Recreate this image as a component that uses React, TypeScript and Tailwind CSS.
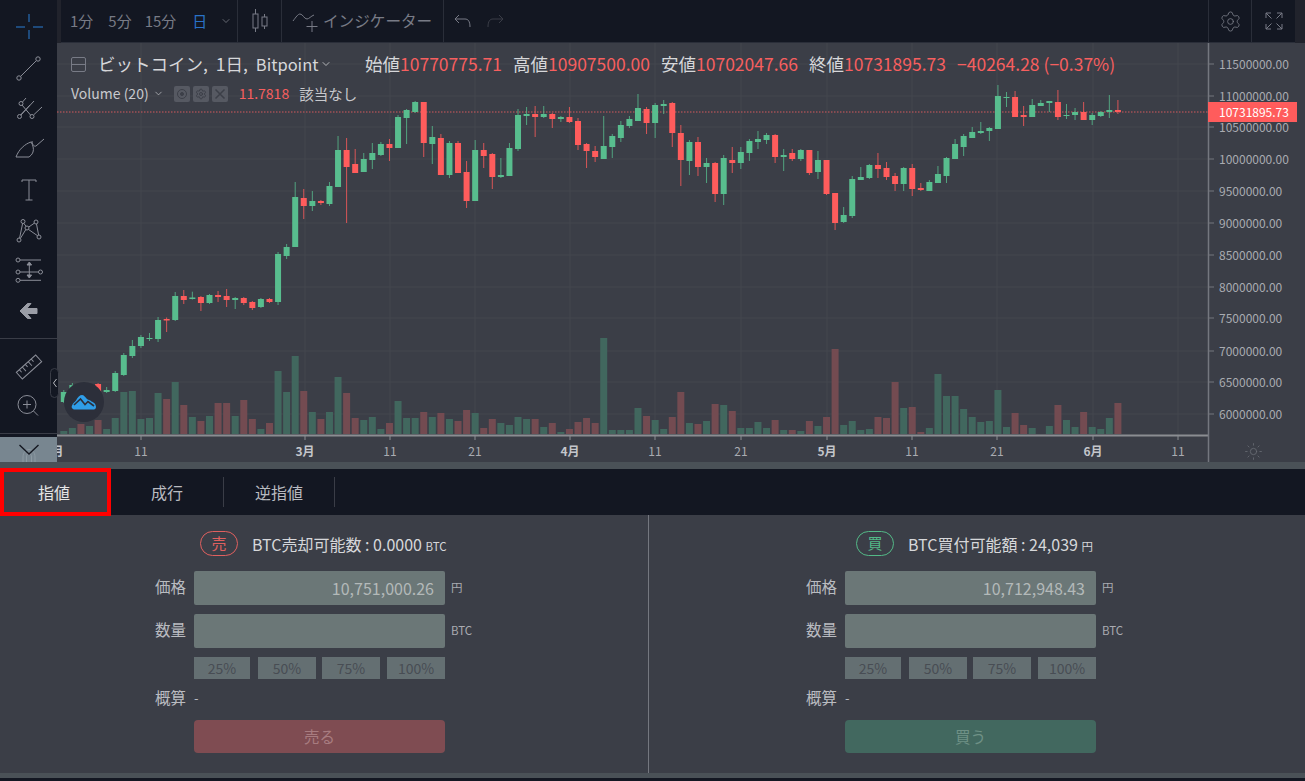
import React from 'react'
import { Settings, ChevronDown, Sun } from 'lucide-react'

// candle tuples: [bodyTop, bodyBottom, wickTop, wickBottom, 1 = green | 0 = red]
const CANDLES: number[][] = [
  [392,402,390,403,1],[385,393,383,395,1],[388,394,386,396,1],[386,392,384,394,0],[384,392,383,393,0],[390,392,387,393,1],[373,391,371,392,1],[355,375,353,376,1],[346,356,340,358,1],[337,346,335,348,1],
  [338,339,333,341,1],[320,339,317,342,1],[319,320.5,317.5,332,0],[296,320,292,321,1],[296,300,290,304,0],[297.5,299,291.7,299.5,1],[297,303,296,311,0],[295,303,294,304,1],[295,297,291,302,0],[296,300,289,307,0],
  [298,300,297,309,1],[298,303,297,305,0],[302,308,301,310,0],[299,307,298,308,1],[299,302,298,303,0],[254,302,252,305,1],[247,256,244,259,1],[197,247,182,247,1],[198,206,189,219,0],[201,206,191,211,1],
  [201,203,200,205,0],[186,204,182,206,1],[150,187,136,187,1],[150,167,138,223,0],[164,173,149,173,0],[159,172,153,172,1],[153,160,143,169,1],[144,155,142,156,1],[144,148,139,161,0],[117,148,115,148,1],
  [110,118,109,144,1],[102,112,101,113,1],[102,143,102,157,0],[137,144,126,164,1],[138,175,134,175,0],[143,175,141,178,1],[143,173,141,173,0],[172,201,161,208,0],[150,201,140,201,1],[150,156,143,168,0],
  [154,177,153,189,0],[175,177,158,178,1],[148,176,143,176,1],[115,149,109,151,1],[114,116,107,125,1],[114,117,106,137,0],[114,117,106,118,1],[114,119,113,128,0],[117,119,116,122,1],[117,122,107,123,0],
  [121,145,118,150,0],[144,151,143,168,0],[151,157,146,162,0],[146,159,116,159,1],[136,147,134,158,1],[125,138,121,142,1],[119,126,116,128,1],[108,121,94,121,1],[109,123,107,134,0],[105,123,103,138,1],
  [104,106,100,114,1],[103,133,102,147,0],[133,160,125,186,0],[142,161,140,175,1],[142,167,137,176,0],[163,167,158,183,1],[163,194,162,202,0],[158,194,155,205,1],[160,163,147,173,0],[152,163,147,169,1],
  [141,153,139,161,1],[139,142,131,149,1],[135,140,133,144,1],[135,157,134,163,0],[155,157,149,171,1],[153,159,149,161,0],[150,159,149,161,1],[150,173,150,175,0],[160,172,151,179,1],[160,194,160,195,0],
  [193,223,193,230,0],[215,222,207,223,1],[179,216,176,218,1],[177,180,167,180,1],[165,178,164,179,1],[165,169,153,178,0],[168,177,162,180,0],[176,184,173,191,0],[168,184,167,191,1],[168,189,164,196,0],
  [188,190,183,191,0],[182,191,180,191,1],[174,183,166,183,1],[158,176,157,183,1],[144,159,139,159,1],[136,147,134,156,1],[132,138,127,138,1],[131,133,122,134,1],[128,131,127,141,1],[96,129,85,129,1],
  [97,98,92,107,1],[97,117,91,117,0],[115,117,106,126,0],[105,117,99,117,1],[103,106,100,106,1],[101,103,101,112,1],[102,117,90,120,0],[115,116,104,119,1],[112,115,108,120,1],[112,120,102,120,0],
  [115,120,113,125,1],[112,116,111,117,1],[110,112,95,118,1],[110,112,100,114,0],
]

// volume tuples: [top, 1 = green | 0 = red]
const VOLUMES: number[][] = [
  [431,1],[428,1],[424,0],[426,1],[420,0],[429,1],[418,1],[392,1],[391,1],[419,1],[418,1],[393,1],[399,0],[382,1],[405,0],[417,1],[421,0],[416,1],[403,0],[403,0],
  [416,1],[400,0],[419,0],[429,1],[423,0],[371,1],[392,1],[356,1],[391,0],[412,1],[419,0],[412,1],[377,1],[393,0],[418,0],[420,1],[417,1],[429,1],[423,0],[401,1],
  [418,1],[418,1],[412,0],[417,1],[413,0],[419,1],[421,0],[410,0],[413,1],[428,0],[419,0],[423,1],[425,1],[417,1],[419,1],[419,0],[427,1],[423,0],[432,1],[429,0],
  [422,0],[418,0],[423,0],[338,1],[430,1],[430,1],[430,1],[408,1],[416,0],[420,1],[429,1],[417,0],[392,0],[423,1],[424,0],[421,1],[404,0],[405,1],[411,0],[428,1],
  [428,1],[422,1],[428,1],[420,0],[430,1],[430,0],[431,1],[421,0],[426,1],[417,0],[349,0],[425,1],[421,1],[430,1],[429,1],[417,0],[418,0],[382,0],[408,1],[407,0],
  [432,0],[428,1],[374,1],[396,1],[396,1],[409,1],[417,1],[422,1],[421,1],[390,1],[427,1],[413,0],[425,0],[428,1],[434,1],[426,1],[405,0],[420,1],[427,1],[412,0],
  [427,1],[429,1],[418,1],[403,0],
]

const PRICES = [
  ['11500000.00', 64], ['11000000.00', 96], ['10500000.00', 127], ['10000000.00', 159], ['9500000.00', 191], ['9000000.00', 223],
  ['8500000.00', 255], ['8000000.00', 287], ['7500000.00', 318], ['7000000.00', 351], ['6500000.00', 382], ['6000000.00', 414],
] as const

const TICKS: [string, number, boolean][] = [
  ['2月', 54, true], ['11', 141, false], ['3月', 305, true], ['11', 390, false], ['21', 475, false], ['4月', 570, true], ['11', 655, false],
  ['21', 741, false], ['5月', 827, true], ['11', 912, false], ['21', 997, false], ['6月', 1093, true], ['11', 1178, false],
]

const GREEN = '#58bd8e'
const RED = '#ff5c5c'

function candleX(i: number) {
  return 63.8 + 8.57 * i
}

function Chart() {
  return (
    <svg viewBox="57 43 1248 419" className="block w-[1248px] h-[419px]" fontFamily="'Noto Sans CJK JP', sans-serif">
      {PRICES.map(([, y]) => (
        <line key={y} x1="57" x2="1208" y1={y} y2={y} stroke="#44474f" />
      ))}
      {TICKS.map(([, x], i) => (
        <line key={i} x1={x} x2={x} y1="43" y2="435" stroke="#44474f" />
      ))}
      {VOLUMES.map(([top, up], i) => (
        <rect key={i} x={candleX(i) - 3.5} y={top} width="7" height={434 - top} fill={up ? '#41675e' : '#734b51'} />
      ))}
      <line x1="57" x2="1208" y1="112" y2="112" stroke="#d2595c" strokeDasharray="1.5 1.5" />
      {CANDLES.map(([bt, bb, wt, wb, up], i) => {
        const x = candleX(i)
        const c = up ? GREEN : RED
        return (
          <g key={i}>
            <line x1={x} x2={x} y1={wt} y2={wb} stroke={c} opacity="0.8" />
            <rect x={x - 3} y={bt} width="6" height={bb - bt} fill={c} />
          </g>
        )
      })}
      {/* time axis */}
      <line x1="57" x2="1208" y1="435.5" y2="435.5" stroke="#8b8d92" strokeWidth="2" />
      {TICKS.map(([label, x, bold], i) => (
        <g key={i}>
          <line x1={x} x2={x} y1="436" y2="440" stroke="#8b8d92" />
          <text x={x} y="456" textAnchor="middle" fontSize="12" fontWeight={bold ? 700 : 400} fill={bold ? '#c4c6cb' : '#a9abb1'}>
            {label}
          </text>
        </g>
      ))}
      {/* price axis */}
      <line x1="1208.5" x2="1208.5" y1="43" y2="462" stroke="#74777f" strokeWidth="1.5" />
      {PRICES.map(([label, y]) => (
        <g key={y}>
          <line x1="1208" x2="1214" y1={y} y2={y} stroke="#74777f" />
          <text x="1219" y={y + 4.5} fontSize="12" fill="#a9abb1">
            {label}
          </text>
        </g>
      ))}
      <rect x="1208" y="102" width="89" height="20" fill={RED} />
      <text x="1219" y="116.5" fontSize="12" fill="#ffffff">
        10731895.73
      </text>
    </svg>
  )
}

function Tool({ children, className = 'text-[#8b8e98]' }: { children: React.ReactNode; className?: string }) {
  return (
    <div className="flex h-[40.5px] shrink-0 items-center justify-center">
      <svg viewBox="0 0 28 28" className={`h-7 w-7 overflow-visible ${className}`} fill="none" stroke="currentColor" strokeWidth="1">
        {children}
      </svg>
    </div>
  )
}

function Sidebar() {
  return (
    <div className="flex h-[462px] w-[57px] shrink-0 flex-col bg-[#131722] pt-[7px]">
      <Tool className="text-[#2a7fd4]">
        <path d="M1 14H10M18 14H28M14 1V9M14 17V26" />
      </Tool>
      <Tool>
        <circle cx="4" cy="24" r="2.2" />
        <circle cx="23" cy="5" r="2.2" />
        <path d="M5.6 22.4L21.4 6.6" />
      </Tool>
      <Tool>
        <circle cx="4.5" cy="22.5" r="2" />
        <circle cx="17" cy="22.5" r="2" />
        <circle cx="6" cy="9.5" r="2" />
        <path d="M6 21L19 7M5.5 21L15 11M18.5 21L27 13M7.5 8L11 4M7 11L15.5 21" />
      </Tool>
      <Tool>
        <path d="M1 22C4 14 10 9 16 7C18 10 19 14 18 17C17 20 15 21 14 22Z" />
        <path d="M17 6C17 9 19 12 21 11L29 4" />
      </Tool>
      <Tool>
        <path d="M7 7V5H21V7M14 5V25M10.5 25H17.5" />
      </Tool>
      <Tool>
        <circle cx="8" cy="5.5" r="2" />
        <circle cx="21" cy="6" r="2" />
        <circle cx="12" cy="12" r="2" />
        <circle cx="4" cy="24" r="2" />
        <circle cx="24" cy="21" r="2" />
        <path d="M4.6 22L7.6 7.5M8.8 7.3L11 10.3M13.8 11L19.3 7.2M21.5 8L23.6 19M13.4 13.4L22.5 19.7M5.3 22.5L10.8 13.6" />
      </Tool>
      <Tool>
        <circle cx="3" cy="4" r="2" />
        <circle cx="3" cy="16" r="2" />
        <circle cx="25.5" cy="16" r="2" />
        <circle cx="3" cy="24.3" r="2" />
        <path d="M5 4H26M5 16H23.5M5 24.3H26M14.3 7V21" />
        <path d="M12 9L14.3 6L16.6 9ZM12 19L14.3 22L16.6 19Z" fill="currentColor" />
      </Tool>
      <Tool className="text-[#9a9da6]">
        <path d="M5 14L12.5 6.5H16L11.8 11.5H22V16.5H11.8L16 21.5H12.5Z" fill="currentColor" />
      </Tool>
      <div className="mt-[7px] h-px shrink-0 bg-[#3a3d47]" />
      <div className="mt-2 shrink-0">
        <Tool>
          <g transform="rotate(-42 14 14)">
            <rect x="1" y="9.5" width="26" height="9" />
            <path d="M5 9.5V13M9 9.5V15M13 9.5V13M17 9.5V15M21 9.5V13" />
          </g>
        </Tool>
        <Tool>
          <circle cx="12" cy="10.5" r="9" />
          <path d="M18.5 17L23 21.5M8 10.5H16M12 6.5V14.5" />
        </Tool>
      </div>
      <div className="mt-[5px] h-px shrink-0 bg-[#3a3d47]" />
      <div className="mt-[3px] flex h-[25px] shrink-0 items-start justify-center overflow-hidden bg-[#788690]">
        <svg viewBox="0 0 28 25" className="h-[25px] w-7" fill="none">
          <path d="M8 20C8 10 20 10 20 20V25M8 20V25M11.5 25V20C11.5 15 16.5 15 16.5 20V25" stroke="#8c99a2" />
          <path d="M4.5 8L14 17L23.5 8" stroke="#151821" strokeWidth="1.4" />
        </svg>
      </div>
    </div>
  )
}

function TopBar() {
  return (
    <div className="flex h-[43px] items-stretch bg-[#21232c] pl-1 pr-[10px]">
      <div className="flex flex-1 items-stretch border-b border-[#2a2e39] bg-[#131722] text-[15px] text-[#787b86]">
        <div className="flex w-[177px] items-center border-r border-[#2a2e39]">
          <span className="ml-[9px]">1分</span>
          <span className="ml-[15px]">5分</span>
          <span className="ml-[13px]">15分</span>
          <span className="ml-[16px] text-[#2a72c8]">日</span>
          <ChevronDown className="ml-[13px] text-[#9a9da6]" size={12} strokeWidth={1.2} />
        </div>
        <div className="flex w-11 items-center justify-center border-r border-[#2a2e39]">
          <svg viewBox="0 0 20 24" className="h-6 w-5" fill="none" stroke="currentColor">
            <path d="M5.5 0V23M14.5 5V20" />
            <rect x="3" y="5" width="5" height="14" fill="#131722" />
            <rect x="12" y="8" width="5" height="9" fill="#131722" />
          </svg>
        </div>
        <div className="flex w-[162px] items-center border-r border-[#2a2e39] pl-[10px]">
          <svg viewBox="0 0 26 24" className="h-6 w-[26px]" fill="none" stroke="currentColor">
            <path d="M1 12C4 8 6 5 8 5C11 5 12 10 15 10C17 10 19 7 22 6M20 12V23M14.5 17.5H25.5" />
          </svg>
          <span className="ml-[5px] whitespace-nowrap text-[15.6px]">インジケーター</span>
        </div>
        <div className="flex flex-1 items-center pl-[10px]">
          <svg viewBox="0 0 18 14" className="h-[14px] w-[18px]" fill="none" stroke="currentColor">
            <path d="M5 1L1 5L5 9M1 5H11C14 5 16 7 16 13" />
          </svg>
          <svg viewBox="0 0 18 14" className="ml-[14px] h-[14px] w-[18px] text-[#3a3d47]" fill="none" stroke="currentColor">
            <path d="M13 1L17 5L13 9M17 5H7C4 5 2 7 2 13" />
          </svg>
        </div>
        <div className="flex w-[44px] items-center justify-center border-x border-[#2a2e39]">
          <Settings size={23} strokeWidth={0.9} />
        </div>
        <div className="flex w-[43px] items-center justify-center">
          <svg viewBox="0 0 20 20" className="h-5 w-5" fill="none" stroke="currentColor">
            <path d="M2 7V2H7M2 2L7.5 7.5M13 2H18V7M18 2L12.5 7.5M2 13V18H7M2 18L7.5 12.5M18 13V18H13M18 18L12.5 12.5" />
          </svg>
        </div>
      </div>
    </div>
  )
}

function OhlcValue({ label, value }: { label: string; value: string }) {
  return (
    <span>
      <span className="text-[#d6d7da]">{label}</span>
      <span className="text-[#f75f5f]">{value}</span>
    </span>
  )
}

function Legend() {
  return (
    <div className="absolute left-[14px] top-[13px] whitespace-nowrap">
      <div className="flex h-4 items-center text-[17.5px]">
        <span className="flex h-[15px] w-[15px] items-center rounded-[2px] border border-[#787b86]">
          <span className="h-px w-full bg-[#787b86]" />
        </span>
        <span className="ml-3 text-[#d6d7da] [word-spacing:4px]">
          ビットコイン, 1日, <span className="text-[16.5px]">Bitpoint</span>
        </span>
        <ChevronDown className="ml-[2px] text-[#d6d7da]" size={12} strokeWidth={1.5} />
        <div className="absolute left-[294px] flex gap-[11px]">
          <OhlcValue label="始値" value="10770775.71" />
          <OhlcValue label="高値" value="10907500.00" />
          <OhlcValue label="安値" value="10702047.66" />
          <OhlcValue label="終値" value="10731895.73" />
          <span className="text-[#f75f5f]">−40264.28 (−0.37%)</span>
        </div>
      </div>
      <div className="mt-[11px] flex items-center text-[14px]">
        <span className="text-[#c8c9cd]">Volume (20)</span>
        <ChevronDown className="ml-[4px] text-[#c8c9cd]" size={11} strokeWidth={1.5} />
        <div className="ml-[10px] flex gap-[3px] text-[#3c3f48]">
          <span className="flex h-4 w-4 items-center justify-center rounded-[2px] bg-[#565962]">
            <svg viewBox="0 0 12 12" className="h-3 w-3" fill="none" stroke="currentColor">
              <circle cx="6" cy="6" r="4.5" />
              <circle cx="6" cy="6" r="1.5" fill="currentColor" />
            </svg>
          </span>
          <span className="flex h-4 w-4 items-center justify-center rounded-[2px] bg-[#565962]">
            <Settings size={12} />
          </span>
          <span className="flex h-4 w-4 items-center justify-center rounded-[2px] bg-[#565962]">
            <svg viewBox="0 0 12 12" className="h-3 w-3" stroke="currentColor" strokeWidth="1.5">
              <path d="M1.5 1.5L10.5 10.5M10.5 1.5L1.5 10.5" />
            </svg>
          </span>
        </div>
        <span className="ml-[11px] text-[#f75f5f]">11.7818</span>
        <span className="ml-[10px] text-[14.5px] text-[#c8c9cd]">該当なし</span>
      </div>
    </div>
  )
}

function ChartLogo() {
  return (
    <>
      <div className="absolute -left-[7px] top-[325px] flex h-[30px] w-[9px] items-center justify-center rounded-[5px] border border-[#3a3d47] bg-[#131722] text-[#b9bbc0]">
        <svg viewBox="0 0 6 10" className="h-[10px] w-[6px]" fill="none" stroke="currentColor">
          <path d="M4.5 1L1.5 5L4.5 9" />
        </svg>
      </div>
      <div className="absolute left-[7px] top-[339px] flex h-10 w-10 items-center justify-center rounded-full bg-[#2c2f3a]">
        <svg viewBox="0 0 26 16" className="h-4 w-[26px]">
          <path d="M1 11.5C2 8.5 4 8 5 6.5C6.5 3 9 1 11 1C13 1 14 3 15.5 4.5C17 6 19 6 20.5 7.5C22.5 8 25 10 25 13C25 15 23.5 15.5 22 15.5H4C1.5 15.5 0 13.5 1 11.5Z" fill="#2f9ee8" />
          <path d="M3 11L9.5 5L14 10.5L17 7.5L23 12" fill="none" stroke="#2c2f3a" strokeWidth="1.6" />
        </svg>
      </div>
    </>
  )
}

function Row({ label, unit, children }: { label: string; unit: string; children: React.ReactNode }) {
  return (
    <div className="flex items-center">
      <span className="w-[39px] -translate-y-px text-[15.5px] text-[#b9bbc0]">{label}</span>
      {children}
      <span className="ml-[6px] text-[11.5px] text-[#a9abb1]">{unit}</span>
    </div>
  )
}

function OrderColumn({ side, label, amount, unit, price, action, pill, button, text, width, pillGap }: {
  side: string
  label: string
  amount: string
  unit: string
  price: string
  action: string
  pill: string
  button: string
  text: string
  width: string
  pillGap: string
}) {
  return (
    <div className={`${width} h-full shrink-0`}>
      <div className="flex h-[56px] items-center pt-[1px]">
        <span className={`${pillGap} flex h-[25px] w-[38px] items-center justify-center rounded-full border text-[15px] ${pill}`}>{side}</span>
        <span className="ml-[14px] whitespace-nowrap text-[16px] text-[#d6d7da]">
          {label} : {amount} <span className="text-[11.5px]">{unit}</span>
        </span>
      </div>
      <div className="flex flex-col">
        <Row label="価格" unit="円">
          <div className="flex h-[34px] w-[251px] items-center justify-end rounded-[2px] bg-[#6b7777] pr-[11px] text-[16px] text-[#b3b9b9]">{price}</div>
        </Row>
        <div className="mt-[9px]">
          <Row label="数量" unit="BTC">
            <div className="h-[34px] w-[251px] rounded-[2px] bg-[#6b7777]" />
          </Row>
        </div>
        <div className="ml-[39px] mt-[9px] flex h-[22px] w-[251px] text-[14px] text-[#484d54]">
          <span className="flex w-[56px] items-center justify-center bg-[#646f72]">25%</span>
          <span className="ml-2 flex w-[58px] items-center justify-center bg-[#646f72]">50%</span>
          <span className="ml-[6px] flex w-[58px] items-center justify-center bg-[#646f72]">75%</span>
          <span className="ml-[7px] flex w-[58px] items-center justify-center bg-[#646f72]">100%</span>
        </div>
        <div className="mt-[8px] flex h-[22px] items-center text-[15.5px] text-[#b9bbc0]">
          <span className="w-[39px]">概算</span>
          <span className="text-[13px]">-</span>
        </div>
        <div className={`ml-[39px] mt-[11px] flex h-[33px] w-[251px] items-center justify-center rounded-[4px] text-[15.5px] ${button} ${text}`}>{action}</div>
      </div>
    </div>
  )
}

export default function App() {
  return (
    <div className="h-[781px] w-[1305px] overflow-hidden bg-[#3b3e47] font-['Noto_Sans_CJK_JP',sans-serif]">
      <div className="flex h-[462px]">
        <Sidebar />
        <div className="flex-1">
          <TopBar />
          <div className="relative">
            <Chart />
            <Legend />
            <ChartLogo />
            <Sun className="absolute left-[1187px] top-[399px] text-[#6b6e76]" size={19} strokeWidth={1} />
          </div>
        </div>
      </div>
      <div className="h-[7px] bg-[#4a5157]" />
      <div className="flex h-[46px] bg-[#131722] text-[16px] text-[#b9bbc0]">
        <div className="relative z-10 -my-px flex h-[48px] w-[111px] items-center justify-center border-4 border-[#f00] bg-[#3b3e47] pr-[3px] text-[#e6e6e6]">指値</div>
        <div className="my-[8px] flex w-[113px] items-center justify-center border-r border-[#3a3d47]">成行</div>
        <div className="my-[8px] flex w-[111px] items-center justify-center border-r border-[#3a3d47]">逆指値</div>
      </div>
      <div className="flex h-[258px]">
        <div className="w-[155px] shrink-0" />
        <OrderColumn
          side="売"
          label="BTC売却可能数"
          amount="0.0000"
          unit="BTC"
          price="10,751,000.26"
          action="売る"
          pill="border-[#e0605f] text-[#e0605f]"
          button="bg-[#7f4c52]"
          text="text-[#a87c80]"
          width="w-[493px]"
          pillGap="ml-[45px]"
        />
        <div className="h-full w-px shrink-0 bg-[#74777f]" />
        <div className="w-[157px] shrink-0" />
        <OrderColumn
          side="買"
          label="BTC買付可能額"
          amount="24,039"
          unit="円"
          price="10,712,948.43"
          action="買う"
          pill="border-[#53b987] text-[#53b987]"
          button="bg-[#42685f]"
          text="text-[#6f9186]"
          width="w-[400px]"
          pillGap="ml-[50px]"
        />
      </div>
      <div className="h-[5px] bg-[#4a5157]" />
      <div className="h-[3px] bg-[#131722]" />
    </div>
  )
}
